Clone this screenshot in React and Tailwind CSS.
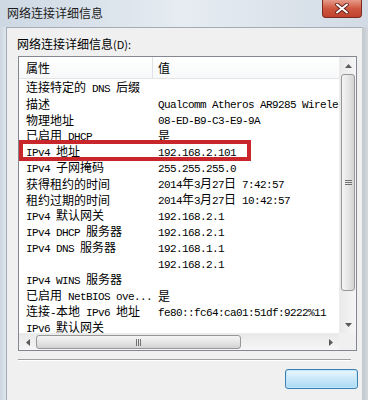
import React from 'react';

const CJK = /([\u3000-\u9fff\uff00-\uffef]+)/;

// SimSun-like mix: CJK at 12px, latin half-width at 6px
const Mixed = ({ text }) => (
  <>
    {text.split(CJK).map((p, i) =>
      !p ? null : CJK.test(p) ? (
        <span key={i} className="text-[12px] font-['Noto_Sans_CJK_SC',sans-serif]">{p}</span>
      ) : (
        <span key={i} className="text-[11px] tracking-[-0.6px] font-['Liberation_Mono','Noto_Sans_CJK_SC',monospace] whitespace-pre">{p}</span>
      )
    )}
  </>
);

const rows = [
  ['连接特定的 DNS 后缀', ''],
  ['描述', 'Qualcomm Atheros AR9285 Wireless Network Adapter'],
  ['物理地址', '08-ED-B9-C3-E9-9A'],
  ['已启用 DHCP', '是'],
  ['IPv4 地址', '192.168.2.101'],
  ['IPv4 子网掩码', '255.255.255.0'],
  ['获得租约的时间', '2014年3月27日 7:42:57'],
  ['租约过期的时间', '2014年3月27日 10:42:57'],
  ['IPv4 默认网关', '192.168.2.1'],
  ['IPv4 DHCP 服务器', '192.168.2.1'],
  ['IPv4 DNS 服务器', '192.168.1.1'],
  ['', '192.168.2.1'],
  ['IPv4 WINS 服务器', ''],
  ['已启用 NetBIOS ove...', '是'],
  ['连接-本地 IPv6 地址', 'fe80::fc64:ca01:51df:9222%11'],
  ['IPv6 默认网关', ''],
];

const Arrow = ({ dir }) => {
  const pts = {
    up: '0,4 3.5,0 7,4',
    down: '0,0 3.5,4 7,0',
    left: '4,0 0,3.5 4,7',
    right: '0,0 4,3.5 0,7',
  }[dir];
  const vertical = dir === 'up' || dir === 'down';
  return (
    <svg width={vertical ? 7 : 4} height={vertical ? 4 : 7}>
      <polygon points={pts} fill="#5a5a5a" />
    </svg>
  );
};

export default function App() {
  return (
    <div className="w-[368px] h-[400px] overflow-hidden flex flex-col bg-[#d6dee7] font-['Noto_Sans_CJK_SC',sans-serif] text-black">
      {/* Title bar */}
      <div className="h-[27px] flex items-start bg-gradient-to-r from-[#cdd8e3] via-[#e6ecf2] to-[#d2dbe5]">
        <span className="pl-[7px] pt-[5px] text-[12px] leading-[16px] text-[#1b1b1b]">网络连接详细信息</span>
        <div className="ml-auto mr-[6px] w-[40px] h-[18px] rounded-b-[4px] border border-t-0 border-[#7d2a1e] bg-gradient-to-b from-[#e59a8a] via-[#cf5641] to-[#c0412b] flex items-center justify-center">
          <svg width="14" height="11" viewBox="0 0 14 11">
            <path d="M2 1.5 L12 9.5 M12 1.5 L2 9.5" stroke="#5a1e16" strokeWidth="3.6" strokeLinecap="round" />
            <path d="M2 1.5 L12 9.5 M12 1.5 L2 9.5" stroke="#ffffff" strokeWidth="2" strokeLinecap="round" />
          </svg>
        </div>
      </div>

      {/* Body */}
      <div className="flex-1 flex">
        <div className="w-[6px] bg-gradient-to-r from-[#cdd6df] to-[#dfe6ed]" />
        <div className="flex-1 flex flex-col bg-[#f0f0f0] border-t border-l border-[#a3adb8]">
          <div className="mt-[8px] ml-[10px] h-[16px] leading-[16px] text-[12px]">
            网络连接详细信息<span className="text-[11px]">(D):</span>
          </div>

          {/* List view */}
          <div className="mt-[4px] ml-[11px] w-[339px] h-[295px] border border-[#828790] bg-white grid grid-cols-[1fr_17px] grid-rows-[1fr_17px]">
            <div className="relative overflow-hidden">
              <div className="h-[22px] flex border-b border-[#e5e5e5] bg-gradient-to-b from-white to-[#f7f8f9]">
                <div className="w-[134px] pl-[7px] flex items-center border-r border-[#e0e2e5] text-[12px]">属性</div>
                <div className="pl-[5px] flex items-center text-[12px]">值</div>
              </div>
              {rows.map(([k, v], i) => (
                <div key={i} className="h-[16px] flex items-center whitespace-nowrap leading-[16px]">
                  <div className="w-[134px] shrink-0 pl-[7px] overflow-hidden"><Mixed text={k} /></div>
                  <div className="pl-[5px] whitespace-nowrap"><Mixed text={v} /></div>
                </div>
              ))}
              {/* red annotation box */}
              <div className="absolute left-0 top-[83px] w-[232px] h-[21px] border-[4px] border-[#c9262b]" />
            </div>

            {/* Vertical scrollbar */}
            <div className="flex flex-col bg-gradient-to-r from-[#e9e9e9] to-[#f6f6f6] border-l border-[#ececec]">
              <div className="h-[17px] flex items-center justify-center"><Arrow dir="up" /></div>
              <div className="flex-1 flex flex-col">
                <div className="h-[217px] mx-[1px] rounded-[3px] border border-[#979797] bg-gradient-to-r from-[#f4f4f4] via-[#e6e6e6] to-[#d3d3d3] flex items-center justify-center">
                  <div className="flex flex-col gap-[1px]">
                    <div className="w-[7px] h-[1px] bg-[#707070]" />
                    <div className="w-[7px] h-[1px] bg-[#707070]" />
                    <div className="w-[7px] h-[1px] bg-[#707070]" />
                  </div>
                </div>
              </div>
              <div className="h-[17px] flex items-center justify-center"><Arrow dir="down" /></div>
            </div>

            {/* Horizontal scrollbar */}
            <div className="flex bg-gradient-to-b from-[#e9e9e9] to-[#f6f6f6] border-t border-[#ececec]">
              <div className="w-[17px] flex items-center justify-center"><Arrow dir="left" /></div>
              <div className="flex-1 flex items-stretch">
                <div className="w-[205px] my-[1px] rounded-[3px] border border-[#979797] bg-gradient-to-b from-[#f4f4f4] via-[#e6e6e6] to-[#d3d3d3] flex items-center justify-center">
                  <div className="flex gap-[1px]">
                    <div className="w-[1px] h-[7px] bg-[#707070]" />
                    <div className="w-[1px] h-[7px] bg-[#707070]" />
                    <div className="w-[1px] h-[7px] bg-[#707070]" />
                  </div>
                </div>
              </div>
              <div className="w-[17px] flex items-center justify-center"><Arrow dir="right" /></div>
            </div>
            <div className="bg-[#f0f0f0]" />
          </div>

          {/* Separator */}
          <div className="mt-[8px] ml-[11px] w-[333px] border-t border-[#a0a0a0] border-b border-b-white" />

          {/* Close button (covered by watermark in the shot) */}
          <div className="mt-[8px] self-end mr-[4px] w-[73px] h-[20px] rounded-[3px] border border-[#3c7fb1] bg-gradient-to-b from-[#eaf6fd] to-[#a9daf5] shadow-[inset_0_0_0_1px_#bfe7fb]" />
        </div>
        <div className="w-[6px] bg-gradient-to-r from-[#c2c8ce] to-[#d2d8de]" />
      </div>
    </div>
  );
}
